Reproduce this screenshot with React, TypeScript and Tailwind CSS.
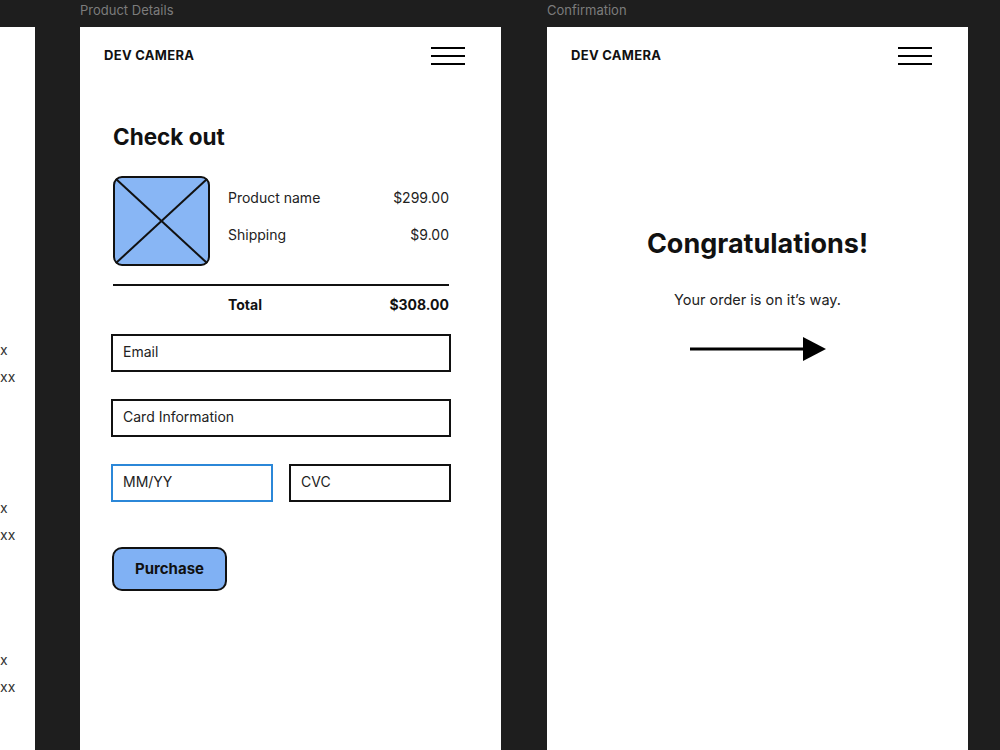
const font = { fontFamily: "Inter, 'Noto Sans', sans-serif" };

const Hamburger = () => (
  <div className="flex flex-col gap-[6px] w-[34px]">
    <span className="block h-[2px] bg-black" />
    <span className="block h-[2px] bg-black" />
    <span className="block h-[2px] bg-black" />
  </div>
);

const Header = () => (
  <div className="h-[56px] pt-px flex items-center justify-between pl-[24px] pr-[36px]">
    <span className="text-[13px] font-bold tracking-[0.3px] text-[#111]">DEV CAMERA</span>
    <Hamburger />
  </div>
);

const ImagePlaceholder = () => (
  <svg width="97" height="90" viewBox="0 0 97 90" className="shrink-0">
    <rect x="1" y="1" width="95" height="88" rx="8" fill="#88b6f5" stroke="#111" strokeWidth="2" />
    <line x1="3" y1="3" x2="94" y2="87" stroke="#111" strokeWidth="2" />
    <line x1="94" y1="3" x2="3" y2="87" stroke="#111" strokeWidth="2" />
  </svg>
);

const Field = ({ label, className = "" }: { label: string; className?: string }) => (
  <div className={`h-[38px] flex items-center px-[10px] pb-[3px] border-2 border-[#111] text-[14px] text-[#222] ${className}`}>
    {label}
  </div>
);

// left-hand frame, only its right edge is on screen
const SideFrame = () => (
  <div className="w-[35px] shrink-0 flex flex-col">
    <div className="h-[27px]" />
    <div className="flex-1 bg-white overflow-hidden text-[14px] text-[#333] leading-[20px]">
      {["mt-[313px]", "mt-[111px]", "mt-[105px]"].map((mt, i) => (
        <div key={i} className={mt}>
          <div>x</div>
          <div className="mt-[7px]">xx</div>
        </div>
      ))}
    </div>
  </div>
);

const Checkout = () => (
  <div className="w-[421px] ml-[45px] shrink-0 flex flex-col">
    <div className="h-[27px] text-[13px] text-[#7c7c7c] leading-[20px]">Product Details</div>
    <div className="flex-1 bg-white">
      <Header />
      <div className="pl-[33px] pr-[52px]">
        <h1 className="mt-[40px] text-[22.5px] leading-[28px] font-bold text-[#111]">Check out</h1>
        <div className="mt-[25px] flex">
          <ImagePlaceholder />
          <div className="ml-[18px] flex-1 pt-[12px] text-[14px] leading-[20px] text-[#222]">
            <div className="flex justify-between">
              <span>Product name</span>
              <span>$299.00</span>
            </div>
            <div className="mt-[17px] flex justify-between">
              <span>Shipping</span>
              <span>$9.00</span>
            </div>
          </div>
        </div>
        <div className="mt-[18px] h-[2px] bg-[#111]" />
        <div className="mt-[9px] ml-[115px] flex justify-between text-[14px] leading-[20px] font-bold text-[#111]">
          <span>Total</span>
          <span>$308.00</span>
        </div>
      </div>
      <div className="pl-[31px] pr-[50px]">
        <Field label="Email" className="mt-[19px]" />
        <Field label="Card Information" className="mt-[27px]" />
        <div className="mt-[27px] flex gap-[16px]">
          <Field label="MM/YY" className="flex-1 !border-[#2b87d8] h-[37px]" />
          <Field label="CVC" className="flex-1 h-[37px]" />
        </div>
        <button className="mt-[45px] w-[115px] h-[44px] rounded-[10px] border-2 border-[#111] bg-[#80b1f4] text-[15px] font-bold text-[#111] ml-px">
          Purchase
        </button>
      </div>
    </div>
  </div>
);

const Confirmation = () => (
  <div className="w-[421px] ml-[46px] shrink-0 flex flex-col">
    <div className="h-[27px] text-[13px] text-[#7c7c7c] leading-[20px]">Confirmation</div>
    <div className="flex-1 bg-white">
      <Header />
      <div className="flex flex-col items-center">
        <h2 className="mt-[145px] text-[27px] leading-[32px] font-bold text-[#111]">Congratulations!</h2>
        <p className="mt-[30px] text-[14.5px] leading-[20px] text-[#222]">Your order is on it’s way.</p>
        <svg width="136" height="24" viewBox="0 0 136 24" className="mt-[27px]">
          <line x1="0" y1="12" x2="116" y2="12" stroke="#000" strokeWidth="3" />
          <polygon points="113,0 136,12 113,24" fill="#000" />
        </svg>
      </div>
    </div>
  </div>
);

export default function App() {
  return (
    <div className="w-[1000px] h-[750px] bg-[#1e1e1e] overflow-hidden flex" style={font}>
      <SideFrame />
      <Checkout />
      <Confirmation />
    </div>
  );
}
